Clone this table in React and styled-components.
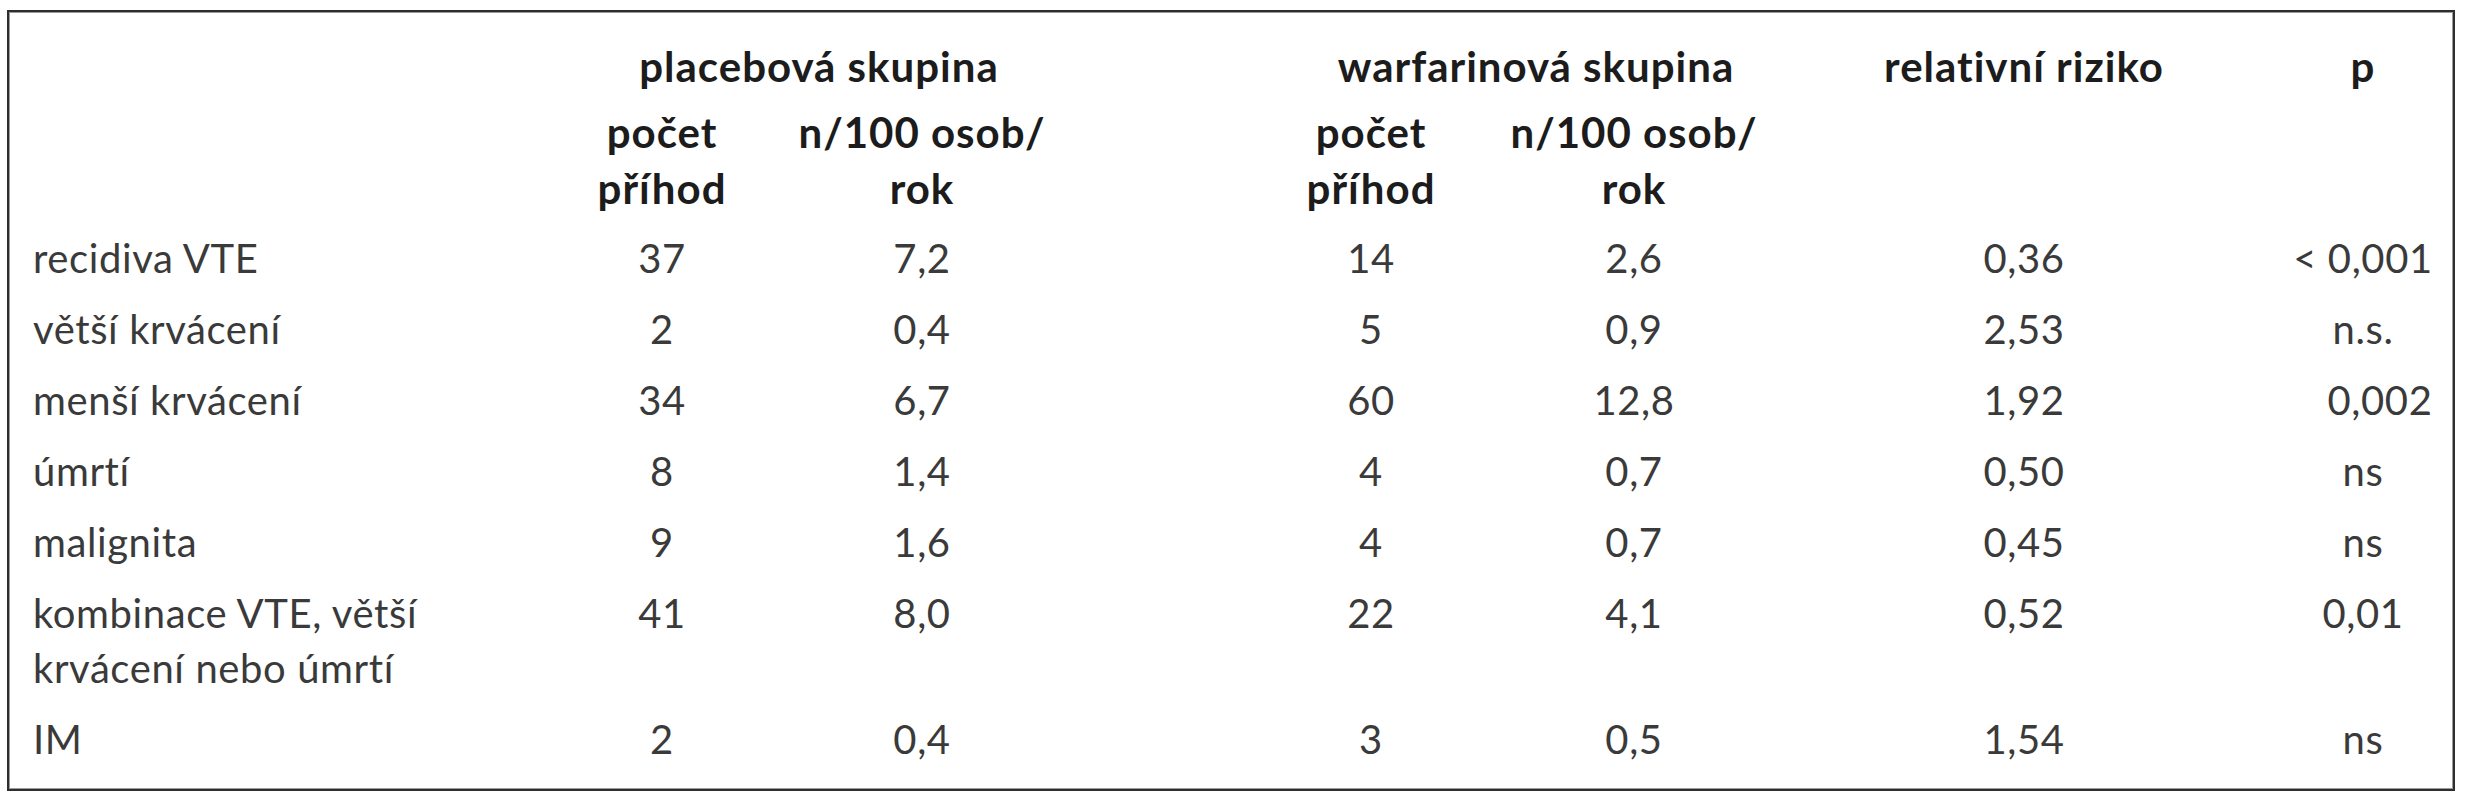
import React from "react";
import styled, { createGlobalStyle } from "styled-components";

const GlobalStyle = createGlobalStyle`
  html, body {
    margin: 0;
    padding: 0;
    background: #ffffff;
  }
  body {
    font-family: Lato, "Noto Sans", "Liberation Sans", sans-serif;
  }
`;

const Frame = styled.div`
  box-sizing: border-box;
  margin: 10px 0 0 7px;
  width: 2448px;
  height: 781px;
  border: 2px solid #2e2e2e;
  box-shadow: inset 0 0 0 1px #9a9a9a;
  padding: 21px 0 0 24px;
  background: #fff;
`;

const Grid = styled.div`
  display: grid;
  grid-template-columns: 526px 206px 314px 194px 196px 330px 450px 228px;
  color: #333;
`;

const Cell = styled.div`
  text-align: ${(p) => (p.$left ? "left" : "center")};
  font-size: 40px;
  letter-spacing: 0.6px;
  line-height: 55px;
  padding: 8px 0 8px ${(p) => p.$indent || 0}px;
  font-weight: 400;
  color: #3a3a3a;
  white-space: nowrap;
`;

const HeadCell = styled.div`
  text-align: center;
  grid-column: ${(p) => (p.$span ? `span ${p.$span}` : "auto")};
  font-size: 42px;
  letter-spacing: 1px;
  line-height: ${(p) => (p.$sub ? 56 : 58)}px;
  padding: ${(p) => (p.$sub ? "4px 0 7px" : "4px 0 5px")};
  font-weight: 700;
  color: #1c1c1c;
  white-space: nowrap;
`;

const headers2 = [
  ["počet", "příhod"],
  ["n/100 osob/", "rok"],
];

const rows = [
  { label: ["recidiva VTE"], v: ["37", "7,2", "14", "2,6", "0,36"], p: "< 0,001" },
  { label: ["větší krvácení"], v: ["2", "0,4", "5", "0,9", "2,53"], p: "n.s." },
  { label: ["menší krvácení"], v: ["34", "6,7", "60", "12,8", "1,92"], p: "0,002", pIndent: 34 },
  { label: ["úmrtí"], v: ["8", "1,4", "4", "0,7", "0,50"], p: "ns" },
  { label: ["malignita"], v: ["9", "1,6", "4", "0,7", "0,45"], p: "ns" },
  {
    label: ["kombinace VTE, větší", "krvácení nebo úmrtí"],
    v: ["41", "8,0", "22", "4,1", "0,52"],
    p: "0,01",
  },
  { label: ["IM"], v: ["2", "0,4", "3", "0,5", "1,54"], p: "ns" },
];

const Lines = ({ lines }) =>
  lines.map((l, i) => (
    <React.Fragment key={i}>
      {i > 0 && <br />}
      {l}
    </React.Fragment>
  ));

export default function App() {
  return (
    <>
      <GlobalStyle />
      <Frame>
        <Grid>
          <HeadCell />
          <HeadCell $span={2}>placebová skupina</HeadCell>
          <HeadCell />
          <HeadCell $span={2}>warfarinová skupina</HeadCell>
          <HeadCell>relativní riziko</HeadCell>
          <HeadCell>p</HeadCell>

          <HeadCell $sub />
          {headers2.map((h, i) => (
            <HeadCell key={`a${i}`} $sub>
              <Lines lines={h} />
            </HeadCell>
          ))}
          <HeadCell $sub />
          {headers2.map((h, i) => (
            <HeadCell key={`b${i}`} $sub>
              <Lines lines={h} />
            </HeadCell>
          ))}
          <HeadCell $sub />
          <HeadCell $sub />

          {rows.map((r, ri) => (
            <React.Fragment key={ri}>
              <Cell $left>
                <Lines lines={r.label} />
              </Cell>
              <Cell>{r.v[0]}</Cell>
              <Cell>{r.v[1]}</Cell>
              <Cell />
              <Cell>{r.v[2]}</Cell>
              <Cell>{r.v[3]}</Cell>
              <Cell>{r.v[4]}</Cell>
              <Cell $indent={r.pIndent}>{r.p}</Cell>
            </React.Fragment>
          ))}
        </Grid>
      </Frame>
    </>
  );
}
